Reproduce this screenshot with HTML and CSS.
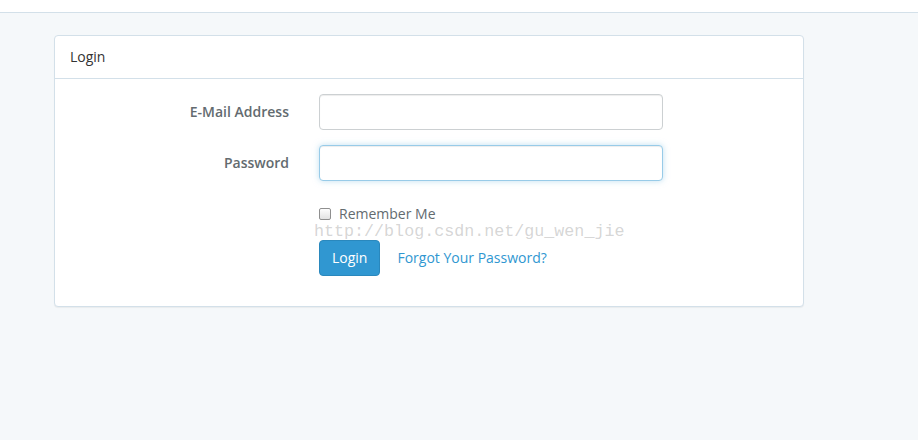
FILE: index.html
```html
<!DOCTYPE html>
<html>
<head>
<meta charset="utf-8">
<link rel="stylesheet" href="styles.css">
</head>
<body>
<div class="topbar"></div>
<main class="page">
  <section class="panel">
    <div class="panel-heading">Login</div>
    <div class="panel-body">
      <form class="form">
        <div class="row">
          <label class="control-label">E-Mail Address</label>
          <input class="input" type="email">
        </div>
        <div class="row">
          <label class="control-label">Password</label>
          <input class="input input-focus" type="password">
        </div>
        <div class="row">
          <span></span>
          <label class="check"><span class="box"></span>Remember Me</label>
        </div>
        <div class="row">
          <span></span>
          <div class="actions">
            <button class="btn" type="button">Login</button>
            <a class="link" href="#">Forgot Your Password?</a>
          </div>
        </div>
      </form>
      <div class="watermark">http://blog.csdn.net/gu_wen_jie</div>
    </div>
  </section>
</main>
</body>
</html>
```
FILE: styles.css
```css
html, body {
  margin: 0;
  padding: 0;
}
body {
  background: #f5f8fa;
  font-family: "Open Sans", Lato, sans-serif;
  font-size: 14px;
  line-height: 1.6;
  color: #636b6f;
  height: 440px;
  overflow: hidden;
}
.topbar {
  height: 12px;
  background: #fff;
  border-bottom: 1px solid #d3e0e9;
}
.page {
  padding: 22px 0 0 54px;
}
.panel {
  width: 748px;
  background: #fff;
  border: 1px solid #d3e0e9;
  border-radius: 4px;
  box-shadow: 0 1px 1px rgba(0,0,0,0.05);
}
.panel-heading {
  height: 43px;
  box-sizing: border-box;
  padding: 10px 15px;
  border-bottom: 1px solid #d3e0e9;
  color: #333;
  font-size: 14px;
  line-height: 22px;
}
.panel-body {
  position: relative;
  padding: 15px 15px 15px 15px;
}
.row {
  display: grid;
  grid-template-columns: 219px 344px;
  column-gap: 30px;
  margin-bottom: 15px;
}
.control-label {
  text-align: right;
  font-weight: 600;
  padding-top: 7px;
  line-height: 22px;
  color: #636b6f;
}
.input {
  height: 36px;
  box-sizing: border-box;
  margin: 0;
  border: 1px solid #ccd0d2;
  border-radius: 4px;
  box-shadow: inset 0 1px 1px rgba(0,0,0,0.075);
  background: #fff;
  outline: none;
}
.input-focus {
  border-color: #98cbe8;
  box-shadow: inset 0 1px 1px rgba(0,0,0,0.075), 0 0 6px rgba(152,203,232,0.6);
}
.check {
  display: flex;
  align-items: center;
  padding-top: 7px;
  height: 22px;
  color: #636b6f;
}
.box {
  width: 12px;
  height: 12px;
  border: 1px solid #8f8f8f;
  border-radius: 2px;
  background: linear-gradient(#fdfdfd, #e2e2e2);
  margin-right: 8px;
  box-sizing: border-box;
}
.actions {
  display: flex;
  align-items: center;
  gap: 17px;
}
.btn {
  height: 36px;
  box-sizing: border-box;
  padding: 6px 12px;
  font: inherit;
  color: #fff;
  background: #3097d1;
  border: 1px solid #2a88bd;
  border-radius: 4px;
}
.link {
  color: #3097d1;
  text-decoration: none;
}
.watermark {
  position: absolute;
  left: 259px;
  top: 140px;
  font-family: "Liberation Mono", monospace;
  font-size: 16.7px;
  color: rgba(150,150,150,0.4);
  white-space: nowrap;
  pointer-events: none;
}
```
